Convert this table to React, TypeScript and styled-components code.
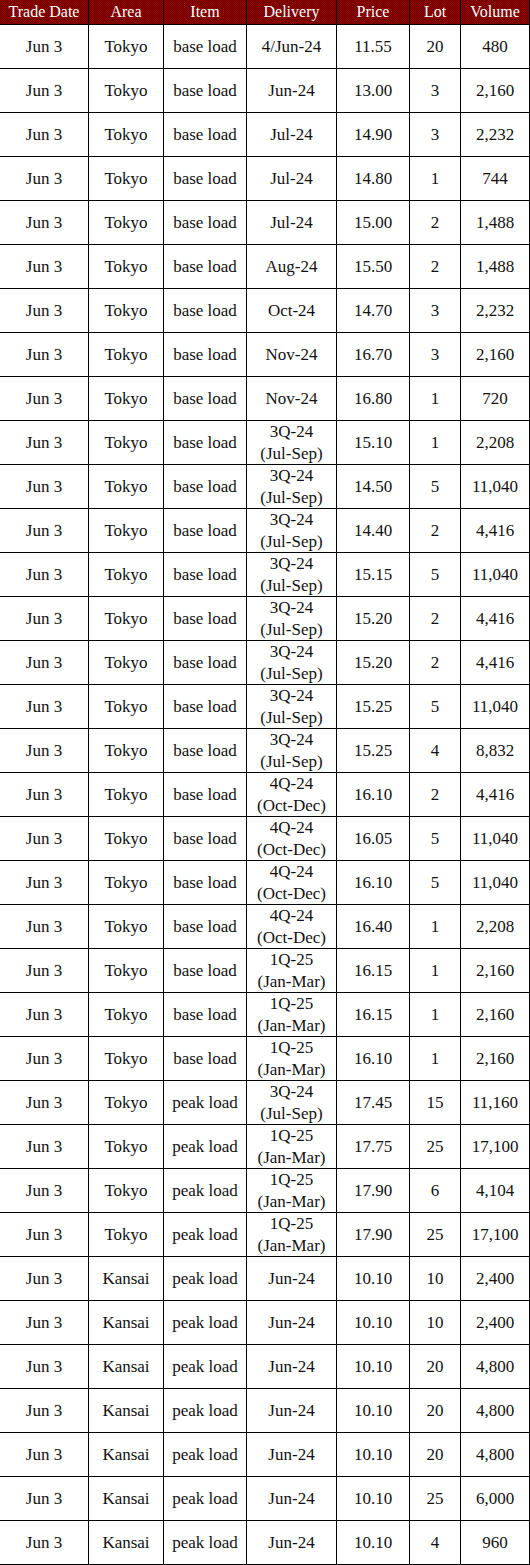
import React from 'react';
import styled, { createGlobalStyle } from 'styled-components';

const GlobalStyle = createGlobalStyle`
  html, body {
    margin: 0;
    padding: 0;
    background: #ffffff;
  }
`;

const widths = [89, 75, 83, 90, 73, 51, 69];

const Grid = styled.div`
  display: grid;
  grid-template-columns: ${widths.map((w) => `${w}px`).join(' ')};
  width: 530px;
  font-family: 'Liberation Serif', 'DejaVu Serif', serif;
  color: #111;
`;

const HeadCell = styled.div`
  box-sizing: border-box;
  height: 25px;
  display: flex;
  align-items: center;
  justify-content: center;
  border-right: 1px solid #000;
  border-bottom: 1px solid #000;
  background-color: #7f0000;
  background-image: repeating-conic-gradient(#9c0000 0% 25%, #640000 0% 50%);
  background-size: 2px 2px;
  color: #fff;
  font-size: 16px;
  white-space: nowrap;
  padding-bottom: 1px;
`;

const Cell = styled.div`
  box-sizing: border-box;
  height: 44px;
  display: flex;
  align-items: center;
  justify-content: center;
  text-align: center;
  border-right: 1px solid #000;
  border-bottom: 1px solid #000;
  font-size: 17px;
  line-height: 22px;
  white-space: pre-line;
`;

type Row = [string, string, string, string, string, string, string];

const q3 = '3Q-24\n(Jul-Sep)';
const q4 = '4Q-24\n(Oct-Dec)';
const q1 = '1Q-25\n(Jan-Mar)';

const rows: Row[] = [
  ['Jun 3', 'Tokyo', 'base load', '4/Jun-24', '11.55', '20', '480'],
  ['Jun 3', 'Tokyo', 'base load', 'Jun-24', '13.00', '3', '2,160'],
  ['Jun 3', 'Tokyo', 'base load', 'Jul-24', '14.90', '3', '2,232'],
  ['Jun 3', 'Tokyo', 'base load', 'Jul-24', '14.80', '1', '744'],
  ['Jun 3', 'Tokyo', 'base load', 'Jul-24', '15.00', '2', '1,488'],
  ['Jun 3', 'Tokyo', 'base load', 'Aug-24', '15.50', '2', '1,488'],
  ['Jun 3', 'Tokyo', 'base load', 'Oct-24', '14.70', '3', '2,232'],
  ['Jun 3', 'Tokyo', 'base load', 'Nov-24', '16.70', '3', '2,160'],
  ['Jun 3', 'Tokyo', 'base load', 'Nov-24', '16.80', '1', '720'],
  ['Jun 3', 'Tokyo', 'base load', q3, '15.10', '1', '2,208'],
  ['Jun 3', 'Tokyo', 'base load', q3, '14.50', '5', '11,040'],
  ['Jun 3', 'Tokyo', 'base load', q3, '14.40', '2', '4,416'],
  ['Jun 3', 'Tokyo', 'base load', q3, '15.15', '5', '11,040'],
  ['Jun 3', 'Tokyo', 'base load', q3, '15.20', '2', '4,416'],
  ['Jun 3', 'Tokyo', 'base load', q3, '15.20', '2', '4,416'],
  ['Jun 3', 'Tokyo', 'base load', q3, '15.25', '5', '11,040'],
  ['Jun 3', 'Tokyo', 'base load', q3, '15.25', '4', '8,832'],
  ['Jun 3', 'Tokyo', 'base load', q4, '16.10', '2', '4,416'],
  ['Jun 3', 'Tokyo', 'base load', q4, '16.05', '5', '11,040'],
  ['Jun 3', 'Tokyo', 'base load', q4, '16.10', '5', '11,040'],
  ['Jun 3', 'Tokyo', 'base load', q4, '16.40', '1', '2,208'],
  ['Jun 3', 'Tokyo', 'base load', q1, '16.15', '1', '2,160'],
  ['Jun 3', 'Tokyo', 'base load', q1, '16.15', '1', '2,160'],
  ['Jun 3', 'Tokyo', 'base load', q1, '16.10', '1', '2,160'],
  ['Jun 3', 'Tokyo', 'peak load', q3, '17.45', '15', '11,160'],
  ['Jun 3', 'Tokyo', 'peak load', q1, '17.75', '25', '17,100'],
  ['Jun 3', 'Tokyo', 'peak load', q1, '17.90', '6', '4,104'],
  ['Jun 3', 'Tokyo', 'peak load', q1, '17.90', '25', '17,100'],
  ['Jun 3', 'Kansai', 'peak load', 'Jun-24', '10.10', '10', '2,400'],
  ['Jun 3', 'Kansai', 'peak load', 'Jun-24', '10.10', '10', '2,400'],
  ['Jun 3', 'Kansai', 'peak load', 'Jun-24', '10.10', '20', '4,800'],
  ['Jun 3', 'Kansai', 'peak load', 'Jun-24', '10.10', '20', '4,800'],
  ['Jun 3', 'Kansai', 'peak load', 'Jun-24', '10.10', '20', '4,800'],
  ['Jun 3', 'Kansai', 'peak load', 'Jun-24', '10.10', '25', '6,000'],
  ['Jun 3', 'Kansai', 'peak load', 'Jun-24', '10.10', '4', '960'],
];

const headers = ['Trade Date', 'Area', 'Item', 'Delivery', 'Price', 'Lot', 'Volume'];

const App = () => {
  return (
    <>
      <GlobalStyle />
      <Grid>
        {headers.map((h) => (
          <HeadCell key={h}>{h}</HeadCell>
        ))}
        {rows.map((row, i) =>
          row.map((value, j) => <Cell key={`${i}-${j}`}>{value}</Cell>)
        )}
      </Grid>
    </>
  );
};

export default App;
